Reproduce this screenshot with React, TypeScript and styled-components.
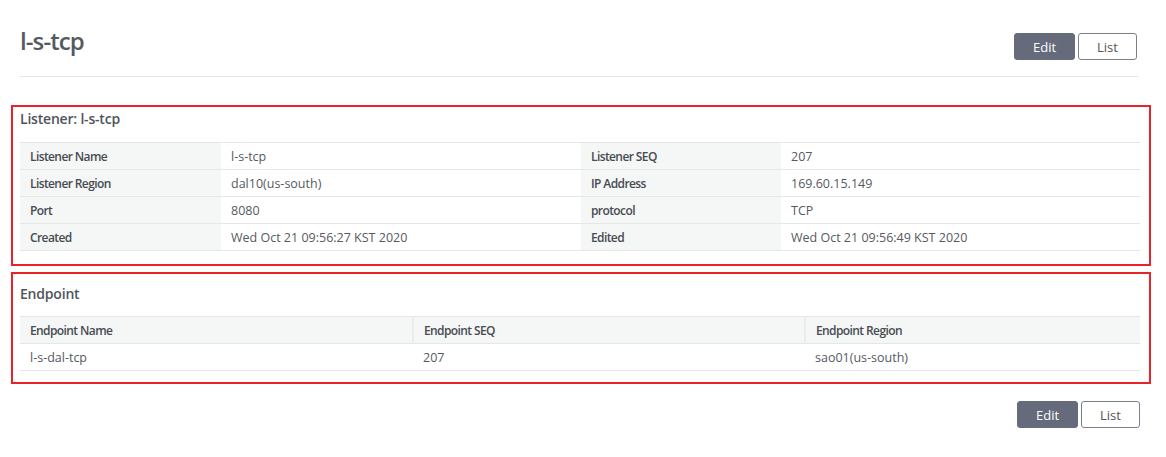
import React from "react";
import styled, { createGlobalStyle } from "styled-components";

const GlobalStyle = createGlobalStyle`
  html, body { margin: 0; padding: 0; background: #fff; }
  body { font-family: "Open Sans", "Noto Sans", sans-serif; color: #555; }
  * { box-sizing: border-box; }
`;

const Page = styled.div`
  width: 1166px;
  padding: 0 26px 0 20px;
`;

const Header = styled.div`
  display: flex;
  align-items: flex-start;
  justify-content: space-between;
  height: 77px;
  border-bottom: 1px solid #e6e6e6;
  margin-right: 2px;
  padding-top: 25px;
`;

const Title = styled.h1`
  margin: 0;
  font-size: 24px;
  line-height: 32px;
  font-weight: 600;
  letter-spacing: -0.9px;
  color: #555a60;
`;

const ButtonRow = styled.div<{ $offset?: number; $top: number }>`
  display: flex;
  gap: 3px;
  justify-content: flex-end;
  padding-top: ${(p) => p.$top}px;
  margin-right: ${(p) => p.$offset ?? 0}px;
`;

const Button = styled.button<{ $primary?: boolean; $w: number }>`
  width: ${(p) => p.$w}px;
  height: 27px;
  border-radius: 3px;
  font-family: "Open Sans", "Noto Sans", sans-serif;
  font-size: 13px;
  padding: 0;
  cursor: pointer;
  border: 1px solid ${(p) => (p.$primary ? "#656b7b" : "#7a7f8c")};
  background: ${(p) => (p.$primary ? "#656b7b" : "#fff")};
  color: ${(p) => (p.$primary ? "#fff" : "#555")};
`;

const Section = styled.section<{ $top: number; $padTop: number; $padBottom: number }>`
  margin: ${(p) => p.$top}px -11px 0 -9px;
  border: 2px solid #e8232b;
  padding: ${(p) => p.$padTop}px 9px ${(p) => p.$padBottom}px 7px;
`;

const SectionTitle = styled.h2<{ $gap: number }>`
  margin: 0 0 ${(p) => p.$gap}px;
  font-size: 14px;
  line-height: 20px;
  font-weight: 600;
  color: #4f545a;
  letter-spacing: -0.2px;
`;

const Table = styled.table`
  width: 100%;
  border-collapse: collapse;
  table-layout: fixed;
  font-size: 12.5px;
`;

const Cell = styled.td<{ $label?: boolean; $w?: number }>`
  height: 27px;
  padding: 0 10px;
  border-top: 1px solid #e5e6e6;
  border-bottom: 1px solid #e5e6e6;
  background: ${(p) => (p.$label ? "#f5f6f6" : "#fff")};
  color: ${(p) => (p.$label ? "#474c52" : "#555a5f")};
  font-size: ${(p) => (p.$label ? "12px" : "12.5px")};
  font-weight: ${(p) => (p.$label ? 600 : 400)};
  letter-spacing: ${(p) => (p.$label ? "-0.6px" : "0")};
  width: ${(p) => (p.$w ? `${p.$w}px` : "auto")};
  white-space: nowrap;
  vertical-align: middle;
`;

const HeadCell = styled.th<{ $w?: number }>`
  height: 27px;
  padding: 0 10px;
  text-align: left;
  background: #f5f6f6;
  border-top: 1px solid #e5e6e6;
  border-bottom: 1px solid #e5e6e6;
  border-left: 2px solid #eaebeb;
  color: #474c52;
  font-size: 12px;
  font-weight: 600;
  letter-spacing: -0.6px;
  width: ${(p) => (p.$w ? `${p.$w}px` : "auto")};
  &:first-child { border-left: none; }
`;

const listener: [string, string, string, string][] = [
  ["Listener Name", "l-s-tcp", "Listener SEQ", "207"],
  ["Listener Region", "dal10(us-south)", "IP Address", "169.60.15.149"],
  ["Port", "8080", "protocol", "TCP"],
  ["Created", "Wed Oct 21 09:56:27 KST 2020", "Edited", "Wed Oct 21 09:56:49 KST 2020"],
];

export default function App() {
  return (
    <Page>
      <GlobalStyle />
      <Header>
        <Title>l-s-tcp</Title>
        <ButtonRow $offset={1} $top={8}>
          <Button $primary $w={61}>Edit</Button>
          <Button $w={59}>List</Button>
        </ButtonRow>
      </Header>

      <Section $top={28} $padTop={2} $padBottom={13}>
        <SectionTitle $gap={13}>Listener: l-s-tcp</SectionTitle>
        <Table>
          <tbody>
            {listener.map((r) => (
              <tr key={r[0]}>
                <Cell $label $w={201}>{r[0]}</Cell>
                <Cell $w={360}>{r[1]}</Cell>
                <Cell $label $w={200}>{r[2]}</Cell>
                <Cell>{r[3]}</Cell>
              </tr>
            ))}
          </tbody>
        </Table>
      </Section>

      <Section $top={6} $padTop={10} $padBottom={11}>
        <SectionTitle $gap={12}>Endpoint</SectionTitle>
        <Table>
          <thead>
            <tr>
              <HeadCell $w={393}>Endpoint Name</HeadCell>
              <HeadCell $w={392}>Endpoint SEQ</HeadCell>
              <HeadCell>Endpoint Region</HeadCell>
            </tr>
          </thead>
          <tbody>
            <tr>
              <Cell>l-s-dal-tcp</Cell>
              <Cell>207</Cell>
              <Cell>sao01(us-south)</Cell>
            </tr>
          </tbody>
        </Table>
      </Section>

      <ButtonRow $offset={0} $top={17}>
        <Button $primary $w={61}>Edit</Button>
        <Button $w={59}>List</Button>
      </ButtonRow>
    </Page>
  );
}
